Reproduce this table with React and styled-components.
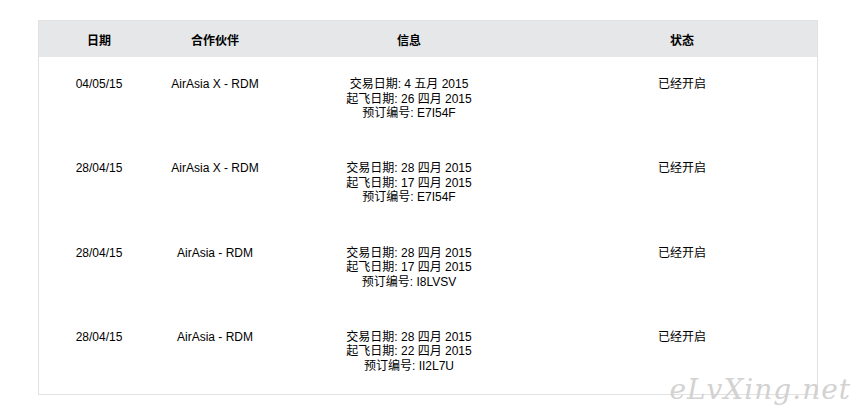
import React from "react";
import styled, { createGlobalStyle } from "styled-components";

const GlobalStyle = createGlobalStyle`
  html, body {
    margin: 0;
    padding: 0;
    background: #fff;
  }
  body {
    font-family: "Liberation Sans", Arial, "Noto Sans CJK SC", sans-serif;
    font-size: 12px;
    color: #000;
  }
`;

const Page = styled.div`
  position: relative;
  width: 864px;
  height: 415px;
  padding: 20px 0 0 38px;
  box-sizing: border-box;
  overflow: hidden;
`;

const Table = styled.table`
  width: 779px;
  border-collapse: collapse;
  border: 1px solid #e2e2e2;
  table-layout: fixed;
`;

const HeadCell = styled.th`
  height: 36px;
  padding: 0;
  background: #e6e7e8;
  font-weight: bold;
  font-size: 12px;
  text-align: center;
  vertical-align: middle;
  width: ${({ $w }) => $w}px;
`;

const Row = styled.tr`
  height: 84.3px;
`;

const Cell = styled.td`
  padding: 20px 0 0;
  text-align: center;
  vertical-align: top;
  line-height: 14.5px;
`;

const InfoLine = styled.div`
  white-space: nowrap;
`;

const Watermark = styled.div`
  position: absolute;
  right: 13px;
  bottom: 9px;
  font-family: "DejaVu Serif", serif;
  font-style: italic;
  font-size: 28px;
  letter-spacing: 1px;
  color: #d2d2d2;
`;

const orders = [
  { date: "04/05/15", partner: "AirAsia X - RDM", deal: "4 五月 2015", fly: "26 四月 2015", code: "E7I54F" },
  { date: "28/04/15", partner: "AirAsia X - RDM", deal: "28 四月 2015", fly: "17 四月 2015", code: "E7I54F" },
  { date: "28/04/15", partner: "AirAsia - RDM", deal: "28 四月 2015", fly: "17 四月 2015", code: "I8LVSV" },
  { date: "28/04/15", partner: "AirAsia - RDM", deal: "28 四月 2015", fly: "22 四月 2015", code: "II2L7U" },
];

export default function App() {
  return (
    <Page>
      <GlobalStyle />
      <Table>
        <thead>
          <tr>
            <HeadCell $w={120}>日期</HeadCell>
            <HeadCell $w={112}>合作伙伴</HeadCell>
            <HeadCell $w={276}>信息</HeadCell>
            <HeadCell $w={270}>状态</HeadCell>
          </tr>
        </thead>
        <tbody>
          {orders.map((o, i) => (
            <Row key={i}>
              <Cell>{o.date}</Cell>
              <Cell>{o.partner}</Cell>
              <Cell>
                <InfoLine>交易日期: {o.deal}</InfoLine>
                <InfoLine>起飞日期: {o.fly}</InfoLine>
                <InfoLine>预订编号: {o.code}</InfoLine>
              </Cell>
              <Cell>已经开启</Cell>
            </Row>
          ))}
        </tbody>
      </Table>
      <Watermark>eLvXing.net</Watermark>
    </Page>
  );
}
